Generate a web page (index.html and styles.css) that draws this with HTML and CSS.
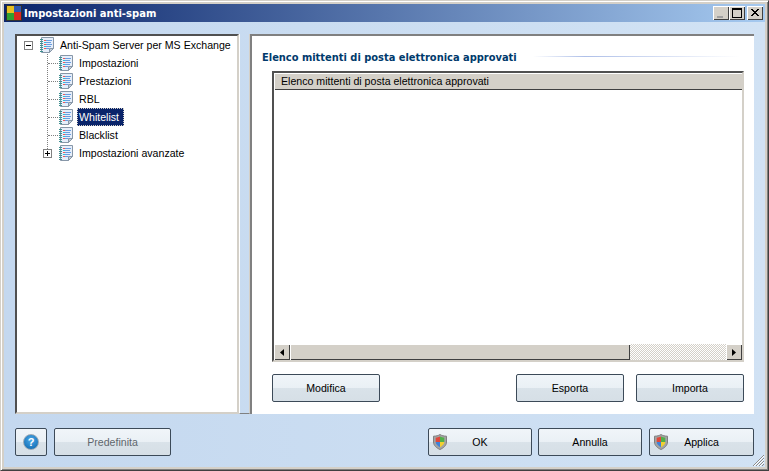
FILE: index.html
```html
<!DOCTYPE html>
<html lang="it">
<head>
    <meta charset="UTF-8">
    <title>Impostazioni anti-spam</title>
    <link rel="stylesheet" href="styles.css">
</head>
<body>

<svg class="defs" width="0" height="0">
    <symbol id="note" viewBox="0 0 14 16">
        <path d="M1.500 .5H13.500V11.500L9.500 15.500H1.500Z" fill="#e6eefa" stroke="#8797a8"/>
        <path d="M9.500 15.500V11.500H13.500Z" fill="#c2ccd8" stroke="#8797a8"/>
        <path d="M0 2.500H3M0 4.500H3M0 6.500H3M0 8.500H3M0 10.500H3M0 12.500H3M0 14.500H3" stroke="#3f8f90"/>
        <path d="M4 3.500H6M4 7.500H6M4 11.500H6" stroke="#ea5a5a"/>
        <path d="M4 5.500H6M4 9.500H6" stroke="#30c0d8"/>
        <path d="M6 3.500H12M6 5.500H11M6 7.500H12M6 9.500H11M6 11.500H9" stroke="#6a9ee0"/>
    </symbol>
    <symbol id="shield" viewBox="0 0 14 16">
        <path d="M7 .5C5.500 1.600 3 2.200 .5 2.200V8C.5 11.500 3.500 14 7 15.500C10.500 14 13.500 11.500 13.500 8V2.200C11 2.200 8.500 1.600 7 .5Z" fill="#a4a4a4" stroke="#808080"/>
        <path d="M7 2.500C5.800 3.200 4.300 3.600 2.700 3.700V8H7Z" fill="#e0483a"/>
        <path d="M7 2.500C8.200 3.200 9.700 3.600 11.300 3.700V8H7Z" fill="#4fb048"/>
        <path d="M2.700 8C2.900 10.300 4.800 12.200 7 13.300V8Z" fill="#3e82d8"/>
        <path d="M11.300 8C11.100 10.300 9.200 12.200 7 13.300V8Z" fill="#f2d030"/>
    </symbol>
</svg>

<div class="window">

    <div class="titlebar">
        <svg class="app-icon" width="16" height="16" viewBox="0 0 16 16">
            <rect x="0" y="0" width="16" height="16" fill="#303030"/>
            <rect x="1" y="1" width="7" height="7" fill="#e8c020"/>
            <rect x="8" y="1" width="7" height="6" fill="#3058b0"/>
            <rect x="1" y="8" width="7" height="7" fill="#30a030"/>
            <rect x="8" y="7" width="7" height="8" fill="#d82820"/>
        </svg>
        <span class="title">Impostazioni anti-spam</span>
        <div class="caption-btns">
            <div class="caption-btn"><svg width="16" height="14"><rect x="4" y="10" width="6" height="2" fill="#a0a0a0"/></svg></div>
            <div class="caption-btn"><svg width="16" height="14"><path d="M3 2H12V11H3ZM3 3H12" fill="none" stroke="#000" shape-rendering="crispEdges"/></svg></div>
            <div class="caption-btn close"><svg width="16" height="14"><path d="M4 3L11 10M5 3L12 10M11 3L4 10M12 3L5 10" stroke="#000" shape-rendering="crispEdges"/></svg></div>
        </div>
    </div>

    <div class="client">
        <div class="main">

            <div class="tree">
                <div class="row root">
                    <span class="expander minus"></span>
                    <svg class="icon"><use href="#note"/></svg>
                    <span class="label">Anti-Spam Server per MS Exchange</span>
                </div>
                <div class="children">
                    <div class="row"><svg class="icon"><use href="#note"/></svg><span class="label">Impostazioni</span></div>
                    <div class="row"><svg class="icon"><use href="#note"/></svg><span class="label">Prestazioni</span></div>
                    <div class="row"><svg class="icon"><use href="#note"/></svg><span class="label">RBL</span></div>
                    <div class="row"><svg class="icon"><use href="#note"/></svg><span class="label selected">Whitelist</span></div>
                    <div class="row"><svg class="icon"><use href="#note"/></svg><span class="label">Blacklist</span></div>
                    <div class="row last">
                        <span class="expander plus"></span>
                        <svg class="icon"><use href="#note"/></svg><span class="label">Impostazioni avanzate</span>
                    </div>
                </div>
            </div>

            <div class="splitter"></div>

            <div class="panel">
                <div class="heading">
                    <h1>Elenco mittenti di posta elettronica approvati</h1>
                    <div class="heading-line"></div>
                </div>

                <div class="list">
                    <div class="list-header"><span>Elenco mittenti di posta elettronica approvati</span></div>
                    <div class="list-body"></div>
                    <div class="scrollbar">
                        <div class="sb-btn"><svg width="4" height="7"><path d="M4 0V7L0 3.500Z" fill="#000"/></svg></div>
                        <div class="sb-thumb"></div>
                        <div class="sb-track"></div>
                        <div class="sb-btn"><svg width="4" height="7"><path d="M0 0V7L4 3.500Z" fill="#000"/></svg></div>
                    </div>
                </div>

                <div class="panel-actions">
                    <button class="btn w108">Modifica</button>
                    <div class="spacer"></div>
                    <button class="btn w108">Esporta</button>
                    <button class="btn w108">Importa</button>
                </div>
            </div>
        </div>

        <div class="footer">
            <button class="btn help"><span class="help-dot">?</span></button>
            <button class="btn predef" disabled>Predefinita</button>
            <div class="spacer"></div>
            <button class="btn w104 has-shield"><svg class="shield"><use href="#shield"/></svg>OK</button>
            <button class="btn w104">Annulla</button>
            <button class="btn w105 has-shield"><svg class="shield"><use href="#shield"/></svg>Applica</button>
        </div>

        <svg class="grip" width="13" height="13"><path d="M12 1L1 12M12 4L4 12M12 7L7 12M12 10L10 12" stroke="#8a8a8a"/><path d="M12 2L2 12M12 5L5 12M12 8L8 12" stroke="#fff"/></svg>
    </div>
</div>

</body>
</html>
```

FILE: styles.css
```css
* {
    box-sizing: border-box;
}
html, body {
    margin: 0;
    padding: 0;
}
body {
    width: 769px;
    height: 471px;
    overflow: hidden;
    font-family: "Liberation Sans", Arial, sans-serif;
    font-size: 10.6px;
    color: #000;
}
.defs {
    position: absolute;
}
.spacer {
    flex: 1;
}

.window {
    width: 769px;
    height: 471px;
    display: flex;
    flex-direction: column;
    padding: 3px;
    background-color: #d4d0c8;
    border: 1px solid;
    border-color: #d4d0c8 #404040 #404040 #d4d0c8;
    box-shadow: inset 1px 1px #fff, inset -1px -1px #808080;
}

.titlebar {
    height: 18px;
    flex: none;
    display: flex;
    align-items: center;
    padding: 0 2px;
    background: linear-gradient(to right, #0a246a, #a6caf0);
    color: #fff;
}
.app-icon {
    flex: none;
    margin-right: 2px;
}
.title {
    font-family: "DejaVu Sans", sans-serif;
    font-weight: bold;
    font-size: 10px;
    flex: 1;
}
.caption-btns {
    display: flex;
}
.caption-btn {
    width: 16px;
    height: 14px;
    background-color: #d4d0c8;
    box-shadow: inset 1px 1px #fff, inset -1px -1px #404040;
}
.caption-btn svg {
    display: block;
}
.caption-btn.close {
    margin-left: 2px;
}

.client {
    flex: 1;
    position: relative;
    display: flex;
    flex-direction: column;
    padding: 12px 11px 11px 11px;
    background: linear-gradient(to right, #c4d8ef, #d1e2f4);
}
.grip {
    position: absolute;
    right: 0;
    bottom: 0;
}
.main {
    display: flex;
    height: 380px;
    flex: none;
}

.tree {
    width: 224px;
    flex: none;
    background-color: #fff;
    border: 2px solid;
    border-color: #505050 #d4d0c8 #d4d0c8 #505050;
}
.row {
    height: 18px;
    display: flex;
    align-items: center;
    position: relative;
}
.icon {
    width: 14px;
    height: 16px;
    flex: none;
}
.label {
    padding: 1px;
    line-height: 14px;
    border: 1px dotted transparent;
    margin-left: 4px;
    white-space: nowrap;
}
.root {
    padding-left: 7px;
}
.root .icon {
    margin-left: 7px;
}
.children {
    margin-left: 30px;
    border-left: 1px dotted #808080;
    height: 99px;
}
.children .row {
    padding-left: 11px;
}
.children .row::before {
    content: "";
    position: absolute;
    left: 0;
    top: 9px;
    width: 10px;
    border-top: 1px dotted #808080;
}
.children .row.last::before {
    display: none;
}
.selected {
    padding-right: 4px;
    background-color: #0a246a;
    color: #fff;
    border-color: #d4d0c8;
}
.expander {
    width: 9px;
    height: 9px;
    flex: none;
    background-color: #fff;
    border: 1px solid #808080;
}
.minus {
    background: linear-gradient(#000, #000) center / 5px 1px no-repeat #fff;
}
.plus {
    position: absolute;
    left: -5px;
    top: 5px;
    background:
        linear-gradient(#000, #000) center / 5px 1px no-repeat,
        linear-gradient(#000, #000) center / 1px 5px no-repeat,
        #fff;
}

.splitter {
    width: 11px;
    flex: none;
    border-left: 1px solid #fff;
    border-right: 1px solid #d4d0c8;
    border-bottom: 1px solid #808080;
}

.panel {
    flex: 1;
    display: flex;
    flex-direction: column;
    padding: 14px 10px 12px 12px;
    background-color: #fff;
    border-top: 2px solid #808080;
    border-left: 2px solid #808080;
}
.heading {
    display: flex;
    align-items: center;
    height: 14px;
    margin-left: -2px;
    flex: none;
}
.heading h1 {
    margin: 0;
    font-size: 9.9px;
    font-family: "DejaVu Sans", sans-serif;
    font-weight: bold;
    color: #003a6c;
    white-space: nowrap;
}
.heading-line {
    flex: 1;
    height: 1px;
    margin-left: 16px;
    margin-right: 4px;
    margin-top: -2px;
    background: linear-gradient(to right, #fff, #aebfe8 25%, #fff);
}

.list {
    flex: 1;
    margin: 7px 0 12px 8px;
    display: flex;
    flex-direction: column;
    background-color: #fff;
    border: 2px solid;
    border-color: #505050 #d4d0c8 #d4d0c8 #505050;
}
.list-header {
    height: 17px;
    flex: none;
    padding-left: 7px;
    line-height: 17px;
    background-color: #d4d0c8;
    box-shadow: inset 1px 1px #fff, inset 0 -1px #404040;
}
.list-body {
    flex: 1;
}
.scrollbar {
    height: 16px;
    flex: none;
    display: flex;
}
.sb-btn {
    width: 16px;
    flex: none;
    display: flex;
    align-items: center;
    justify-content: center;
    background-color: #d4d0c8;
    box-shadow: inset 1px 1px #fff, inset -1px -1px #404040;
}
.sb-thumb {
    width: 340px;
    flex: none;
    background-color: #d4d0c8;
    box-shadow: inset 1px 1px #fff, inset -1px -1px #404040;
}
.sb-track {
    flex: 1;
    background-color: #fff;
    background-image: repeating-conic-gradient(#d4d0c8 0 25%, #fff 0 50%);
    background-size: 2px 2px;
}

.panel-actions {
    display: flex;
    gap: 12px;
    flex: none;
    margin-left: 8px;
}
.footer {
    display: flex;
    gap: 6px;
    flex: none;
    margin-top: 14px;
}

.btn {
    height: 28px;
    padding: 0;
    font-family: "Liberation Sans", Arial, sans-serif;
    font-size: 10.6px;
    color: #000;
    position: relative;
    border: 1px solid #3c4a58;
    border-radius: 2px;
    background: linear-gradient(#f0f5f9, #eaf0f5 50%, #d9e2e9 52%, #d6dfe6);
}
.w108 {
    width: 108px;
}
.w104 {
    width: 104px;
}
.w105 {
    width: 105px;
    margin-left: 1px;
}
.help {
    width: 32px;
    margin-right: 1px;
}
.predef {
    width: 117px;
    color: #5f666c;
}
.help-dot {
    display: inline-block;
    width: 16px;
    height: 16px;
    border-radius: 50%;
    background: radial-gradient(circle at 50% 35%, #4aa8e8, #0a64ac);
    border: 1px solid #9aa8b4;
    color: #fff;
    font-weight: bold;
    font-size: 11px;
    line-height: 14px;
}
.shield {
    position: absolute;
    left: 4px;
    top: 5px;
    width: 14px;
    height: 16px;
}
```
